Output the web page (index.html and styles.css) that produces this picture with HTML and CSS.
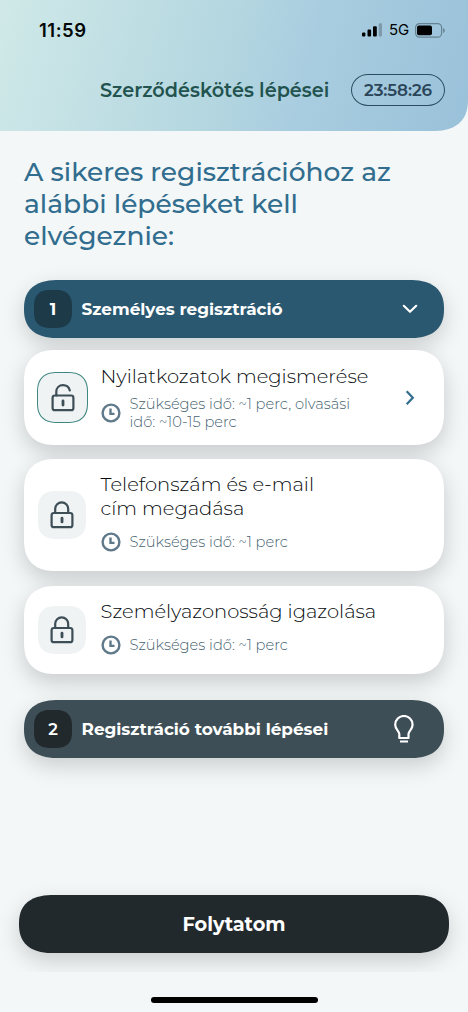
FILE: index.html
```html
<!DOCTYPE html>
<html lang="hu">
<head>
<meta charset="utf-8">
<title>Szerződéskötés lépései</title>
<link rel="stylesheet" href="styles.css">
</head>
<body>
<svg class="defs" width="0" height="0" aria-hidden="true">
  <symbol id="clock" viewBox="0 0 20 20"><circle cx="10" cy="10" r="8.4" fill="none" stroke="currentColor" stroke-width="2.4"/><path d="M9.5 5.5v5.4h4" fill="none" stroke="currentColor" stroke-width="2.4"/></symbol>
  <symbol id="lock" viewBox="0 0 24 28"><g fill="none" stroke="currentColor" stroke-width="2.2" stroke-linecap="round" stroke-linejoin="round"><rect x="1.6" y="12" width="20.8" height="14.2" rx="2.3"/><path d="M5.2 12V7.8a6.5 6.5 0 0 1 13 0V12"/><path d="M12 17.2v3.7" stroke-width="2.8"/></g></symbol>
  <symbol id="unlock" viewBox="0 0 24 28"><g fill="none" stroke="currentColor" stroke-width="2.2" stroke-linecap="round" stroke-linejoin="round"><rect x="1.6" y="11.5" width="20.8" height="14.7" rx="2.3"/><path d="M5.3 11.5V7.8c0-4 2.9-6.6 6.7-6.6 3.3 0 6 2.1 6.8 5.3"/><path d="M12 17v4" stroke-width="2.8"/></g></symbol>
</svg>
<main class="screen">
  <header class="header">
    <div class="status">
      <span class="clock-time">11:59</span>
      <div class="status-icons">
        <svg width="20" height="14" viewBox="0 0 20 14"><rect y="9.5" width="3.4" height="4" rx="1"/><rect x="5.5" y="6.5" width="3.6" height="7" rx="1"/><rect x="11" y="3.2" width="3.8" height="10.3" rx="1"/><rect x="16.7" y=".3" width="3.3" height="13.2" rx="1" opacity=".23"/></svg>
        <span class="network">5G</span>
        <svg width="30" height="15" viewBox="0 0 30 15"><rect x=".6" y=".6" width="26" height="13.6" rx="4" fill="none" stroke="#668391" stroke-width="1.2"/><rect x="2" y="2.4" width="15" height="9.9" rx="2"/><path d="M28.1 5q1.7.6 1.7 2.5t-1.7 2.5z" fill="#668391"/></svg>
      </div>
    </div>
    <div class="titlebar"><h1 class="title">Szerződéskötés lépései</h1><div class="timer">23:58:26</div></div>
  </header>
  <section class="content">
    <h2 class="intro"><span class="line">A sikeres regisztrációhoz az</span><span class="line">alábbi lépéseket kell</span><span class="line">elvégeznie:</span></h2>
    <div class="bar bar-active"><span class="number">1</span><span class="bar-label">Személyes regisztráció</span><svg class="chevron" width="16" height="10" viewBox="0 0 16 10"><path d="m1.8 1.8 6.2 6 6.2-6"/></svg></div>
    <article class="card card-first">
      <div class="tile tile-open"><svg width="24" height="28"><use href="#unlock"/></svg></div>
      <div class="details">
        <h3 class="card-title"><span class="line">Nyilatkozatok megismerése</span></h3>
        <div class="meta"><svg width="20" height="20"><use href="#clock"/></svg><p class="meta-text"><span class="line">Szükséges idő: ~1 perc, olvasási</span><span class="line">idő: ~10-15 perc</span></p></div>
      </div>
      <svg class="arrow" width="10" height="16" viewBox="0 0 10 16"><path d="m1.7 1.3 6.1 6.5-6.1 6.5"/></svg>
    </article>
    <article class="card card-second">
      <div class="tile"><svg width="24" height="28"><use href="#lock"/></svg></div>
      <div class="details">
        <h3 class="card-title"><span class="line">Telefonszám és e-mail</span><span class="line">cím megadása</span></h3>
        <div class="meta"><svg width="20" height="20"><use href="#clock"/></svg><p class="meta-text"><span class="line">Szükséges idő: ~1 perc</span></p></div>
      </div>
    </article>
    <article class="card card-third">
      <div class="tile"><svg width="24" height="28"><use href="#lock"/></svg></div>
      <div class="details">
        <h3 class="card-title"><span class="line">Személyazonosság igazolása</span></h3>
        <div class="meta"><svg width="20" height="20"><use href="#clock"/></svg><p class="meta-text"><span class="line">Szükséges idő: ~1 perc</span></p></div>
      </div>
    </article>
    <div class="bar bar-next"><span class="number number-regular">2</span><span class="bar-label">Regisztráció további lépései</span><svg class="bulb" width="20" height="28" viewBox="0 0 20 28"><path d="M5.3 23v-4.2C4.9 15.7 1.2 14.2 1.2 9.7a8.7 8.7 0 0 1 17.4 0c0 4.5-3.7 6-4.1 9.1V23zM6 26.5h8"/></svg></div>
  </section>
  <footer class="footer"><div class="action"><button class="continue">Folytatom</button></div><div class="home"></div></footer>
</main>
</body>
</html>
```
FILE: styles.css
```css
* { box-sizing: border-box; }
body { margin: 0; background: #f3f7f8; font-family: Montserrat, Inter, sans-serif; }
h1, h2, h3, p { margin: 0; font-weight: 400; }
svg { display: block; flex: none; }
.defs { position: absolute; }
.screen { width: 468px; height: 1012px; display: flex; flex-direction: column; overflow: hidden; }
.header { height: 131px; flex: none; background: linear-gradient(105deg, #d0e9e8 0%, #b3d6e0 48%, #a9cde0 65%, #99c1d9 100%); border-radius: 0 0 36px 0 / 0 0 32px 0; corner-shape: superellipse(1.3); }
.status { height: 60px; padding: 0 22px 0 39px; display: flex; align-items: center; justify-content: space-between; }
.clock-time { font: 600 18.5px/22px Inter, sans-serif; letter-spacing: .5px; color: #050808; }
.status-icons { display: flex; align-items: center; height: 20px; margin-right: 1px; }
.network { width: 26px; margin-left: 7px; font: 400 15px/20px Inter, sans-serif; letter-spacing: -.2px; }
.titlebar { display: flex; align-items: center; justify-content: space-between; height: 60px; padding: 0 23px 0 100px; }
.title { font-size: 19.25px; line-height: 26px; font-weight: 600; color: #22534f; white-space: nowrap; }
.timer { width: 94px; height: 32px; border: 1.5px solid #2b4c61; border-radius: 17px / 16px; display: flex; align-items: center; justify-content: center; font-size: 16.8px; font-weight: 600; letter-spacing: -.1px; color: #2b4559; }
.content { height: 627px; flex: none; padding: 24px 24px 0; }
.line { display: block; white-space: nowrap; }
.intro { height: 125px; padding-top: .5px; font-size: 26.5px; line-height: 32.3px; font-weight: 500; color: #316d8e; }
.bar { height: 58px; display: flex; align-items: center; border-radius: 35px / 29px; corner-shape: superellipse(1.3); color: white; box-shadow: 0 8px 22px rgba(0,0,0,.17); padding-left: 10px; }
.bar-active { background: #2a5870; }
.bar-next { background: #3d4e56; margin-top: 26px; }
.number { width: 38px; height: 38px; margin-right: 9.5px; border-radius: 16px; corner-shape: superellipse(1.3); display: grid; place-items: center; background: #1d3a49; font-size: 16.5px; font-weight: 700; }
.bar-next .number { background: #21292d; }
.number-regular { font-weight: 600; }
.bar-label { font-size: 16.85px; font-weight: 700; white-space: nowrap; }
.chevron { margin-left: auto; margin-right: 26px; fill: none; stroke: white; stroke-width: 2.2; stroke-linecap: round; stroke-linejoin: round; }
.bulb { margin-left: auto; margin-right: 30.5px; fill: none; stroke: white; stroke-width: 2.2; stroke-linejoin: round; }
.card { display: flex; align-items: center; background: white; border-radius: 32px; corner-shape: superellipse(1.3); box-shadow: 0 8px 22px rgba(0,0,0,.18); padding-left: 14px; }
.card-first { height: 95px; margin-top: 12px; padding-left: 13px; }
.card-second { height: 112px; margin-top: 14px; }
.card-third { height: 88px; margin-top: 15px; }
.tile { width: 48px; height: 48px; flex: none; border-radius: 18px; corner-shape: superellipse(1.3); display: grid; place-items: center; background: #eff3f4; color: #3d4e56; }
.tile-open { width: 51px; height: 51px; border: 1.5px solid #3f8782; border-radius: 20px; }
.details { margin-left: 14.5px; width: 280px; }
.card-first .details { margin-left: 12.5px; }
.card-title { font-size: 19.5px; line-height: 24px; font-weight: 300; color: #05090c; }
.meta { display: flex; align-items: center; margin-top: 7px; color: #60798a; gap: 9px; }
.meta-text { font-size: 14.65px; line-height: 18px; font-weight: 300; color: #46626f; }
.card-second .details { padding-bottom: 6px; }
.card-second .meta { margin-top: 12px; }
.card-third .details { padding-bottom: 6px; }
.card-third .meta { margin-top: 12px; }
.arrow { margin-left: auto; margin-right: 29px; fill: none; stroke: #316d8e; stroke-width: 2.2; }
.footer { margin-top: auto; }
.action { height: 97px; padding: 20px 19px; overflow: hidden; }
.continue { width: 430px; height: 58px; border: 0; border-radius: 35px / 29px; corner-shape: superellipse(1.3); background: #21292d; color: white; font-family: Montserrat, Inter, sans-serif; font-size: 19.3px; font-weight: 700; box-shadow: 0 8px 22px rgba(0,0,0,.17); }
.home { width: 167px; height: 6px; border-radius: 3px; background: #000; margin: 25px auto 9px 151px; }
```
